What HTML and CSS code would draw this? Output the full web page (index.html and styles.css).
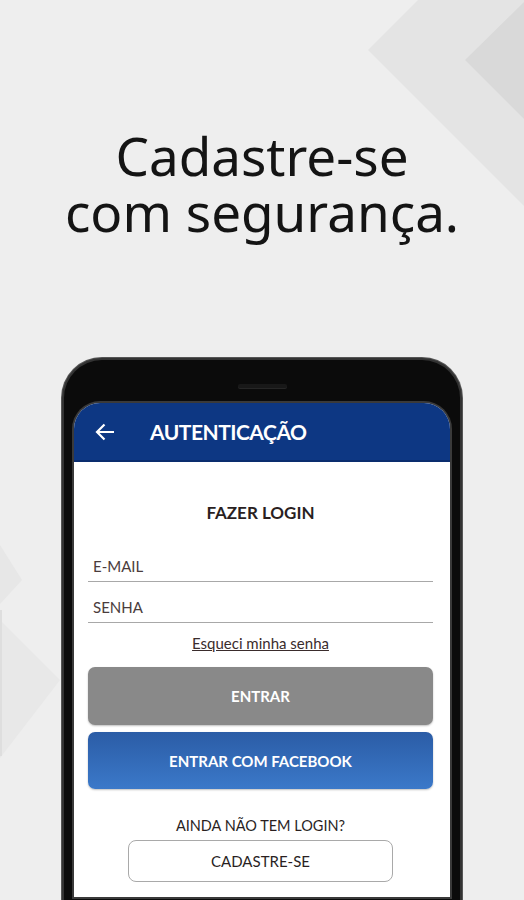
FILE: index.html
```html
<!DOCTYPE html>
<html lang="pt-BR">
<head>
    <meta charset="UTF-8">
    <meta name="viewport" content="width=device-width, initial-scale=1.0">
    <title>Cadastre-se com segurança</title>
    <link rel="stylesheet" href="styles.css">
</head>
<body>
    <svg class="backdrop" width="524" height="900" viewBox="0 0 524 900" aria-hidden="true">
        <polygon points="418,0 524,0 524,206 368,50" fill="#e4e4e4"/>
        <polygon points="524,2 465,60 524,119" fill="#d9d9d9"/>
        <polygon points="0,545 22,580 0,604" fill="#e7e7e7"/>
        <polygon points="0,620 60,680 0,758" fill="#e8e8e8"/>
        <rect x="0" y="610" width="2" height="146" fill="#dedede"/>
    </svg>

    <main class="page">
        <h1 class="headline">
            <span class="headline-line">Cadastre-se</span>
            <span class="headline-line">com segurança.</span>
        </h1>

        <div class="phone">
            <div class="bezel">
                <span class="speaker"></span>
            </div>
            <div class="screen">
                <header class="app-bar">
                    <svg class="back" width="20" height="18" viewBox="0 0 20 18">
                        <path d="M19 9H2 M9.5 1.5 2 9l7.5 7.5" fill="none" stroke="#fff" stroke-width="2.2"/>
                    </svg>
                    <span class="app-title">AUTENTICAÇÃO</span>
                </header>

                <section class="login">
                    <h2 class="login-title">FAZER LOGIN</h2>
                    <div class="field field-first">E-MAIL</div>
                    <div class="field">SENHA</div>
                    <a class="forgot" href="#">Esqueci minha senha</a>
                    <button class="btn btn-grey">ENTRAR</button>
                    <button class="btn btn-facebook">ENTRAR COM FACEBOOK</button>
                    <p class="no-login">AINDA NÃO TEM LOGIN?</p>
                    <button class="btn-outline">CADASTRE-SE</button>
                </section>
            </div>
        </div>
    </main>
</body>
</html>
```

FILE: styles.css
```css
html, body {
    margin: 0;
    padding: 0;
    height: 900px;
    overflow: hidden;
}
body {
    background-color: #eeeeee;
    font-family: Lato, "Noto Sans", sans-serif;
    position: relative;
}
.backdrop {
    position: absolute;
    top: 0;
    left: 0;
}
.page {
    position: relative;
    display: flex;
    flex-direction: column;
    align-items: center;
}
.headline {
    margin: 128px 0 0;
    display: flex;
    flex-direction: column;
    align-items: center;
    font-family: "Noto Sans", sans-serif;
    font-weight: 400;
    font-size: 53px;
    line-height: 56px;
    color: #141414;
}
.headline-line {
    display: block;
    height: 56px;
}

/* phone mockup */
.phone {
    margin-top: 118px;
    width: 376px;
    padding: 0 10px 20px 10px;
    background-color: #0b0b0b;
    border: 2px solid #333333;
    border-bottom: none;
    border-radius: 40px 40px 0 0;
    box-shadow: 0 0 0 1px #555555;
}
.bezel {
    height: 43px;
    display: flex;
    justify-content: center;
}
.speaker {
    margin-top: 24px;
    width: 49px;
    height: 4px;
    border-radius: 3px;
    background-color: #181818;
    box-shadow: 0 1px 0 #262626;
}
.screen {
    height: 494px;
    background-color: #ffffff;
    border-radius: 26px 26px 0 0;
    overflow: hidden;
    box-shadow: 0 0 0 2px #3a3a3a;
}
.app-bar {
    height: 57px;
    display: flex;
    align-items: center;
    padding-left: 21px;
    background-color: #0d3783;
    border-bottom: 2px solid #0a2d6e;
}
.app-title {
    margin-left: 35px;
    color: #ffffff;
    font-size: 21px;
    font-weight: 700;
    letter-spacing: -0.5px;
}

/* login form */
.login {
    display: flex;
    flex-direction: column;
    padding: 41px 17px 0 14px;
    color: #2a1f1f;
}
.login-title {
    margin: 0;
    font-size: 17px;
    line-height: 20px;
    font-weight: 700;
    text-align: center;
}
.field {
    margin-top: 16px;
    padding: 0 5px 6px;
    font-size: 15px;
    line-height: 18px;
    color: #4a3c3c;
    border-bottom: 1.5px solid #a8a8a8;
}
.field-first {
    margin-top: 34px;
}
.forgot {
    margin-top: 11px;
    align-self: center;
    font-size: 15px;
    line-height: 18px;
    color: #3a2c2c;
}
.btn {
    border: none;
    border-radius: 7px;
    color: #ffffff;
    font-family: Lato, sans-serif;
    font-size: 15px;
    font-weight: 700;
    box-shadow: 0 1px 2px rgba(0, 0, 0, 0.25);
}
.btn-grey {
    margin-top: 15px;
    height: 58px;
    background-color: #898989;
}
.btn-facebook {
    margin-top: 7px;
    height: 57px;
    background: linear-gradient(#2b5ca6, #3b79c9);
}
.no-login {
    margin: 28px 0 0;
    font-size: 14.5px;
    line-height: 18px;
    text-align: center;
}
.btn-outline {
    margin-top: 5px;
    align-self: center;
    width: 265px;
    height: 42px;
    background-color: #ffffff;
    border: 1.5px solid #a9a9a9;
    border-radius: 8px;
    color: #2a1f1f;
    font-family: Lato, sans-serif;
    font-size: 15px;
}
```
